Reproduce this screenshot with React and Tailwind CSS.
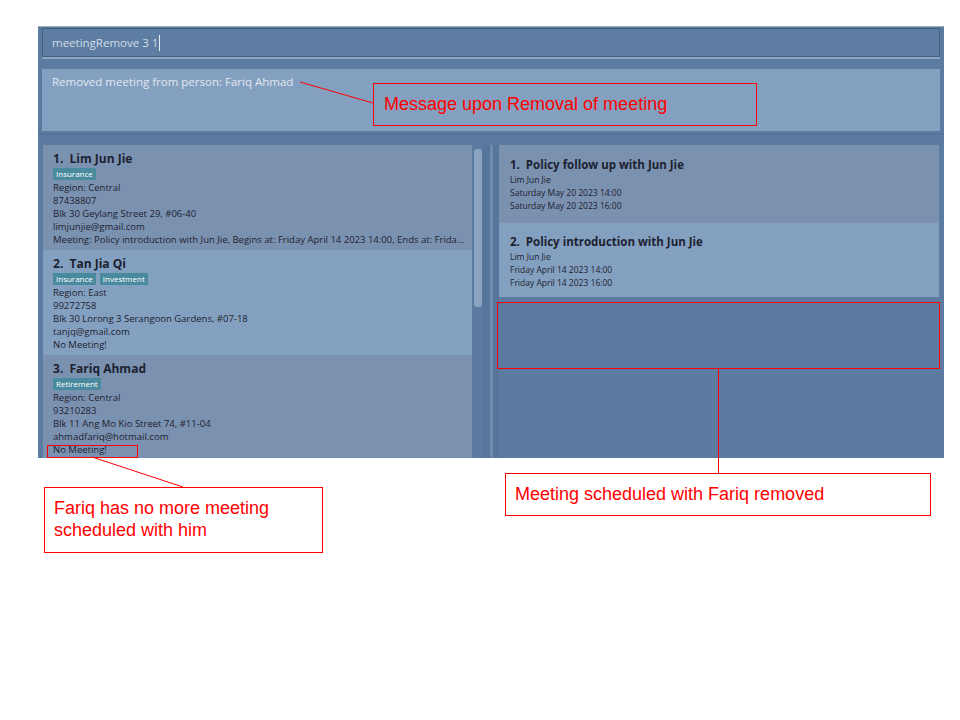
import React from 'react';

const persons = [
  {
    id: 1,
    name: 'Lim Jun Jie',
    tags: ['Insurance'],
    region: 'Central',
    phone: '87438807',
    address: 'Blk 30 Geylang Street 29, #06-40',
    email: 'limjunjie@gmail.com',
    meeting: 'Meeting: Policy introduction with Jun Jie, Begins at: Friday April 14 2023 14:00, Ends at: Friday April 14 2023 16:00',
    dark: true,
  },
  {
    id: 2,
    name: 'Tan Jia Qi',
    tags: ['Insurance', 'Investment'],
    region: 'East',
    phone: '99272758',
    address: 'Blk 30 Lorong 3 Serangoon Gardens, #07-18',
    email: 'tanjq@gmail.com',
    meeting: 'No Meeting!',
    dark: false,
  },
  {
    id: 3,
    name: 'Fariq Ahmad',
    tags: ['Retirement'],
    region: 'Central',
    phone: '93210283',
    address: 'Blk 11 Ang Mo Kio Street 74, #11-04',
    email: 'ahmadfariq@hotmail.com',
    meeting: 'No Meeting!',
    dark: true,
  },
];

const meetings = [
  { id: 1, title: 'Policy follow up with Jun Jie', person: 'Lim Jun Jie', start: 'Saturday May 20 2023 14:00', end: 'Saturday May 20 2023 16:00', dark: true },
  { id: 2, title: 'Policy introduction with Jun Jie', person: 'Lim Jun Jie', start: 'Friday April 14 2023 14:00', end: 'Friday April 14 2023 16:00', dark: false },
];

const font = { fontFamily: '"Open Sans", "Noto Sans", sans-serif' };
const arial = { fontFamily: '"Liberation Sans", Arial, sans-serif' };

const PersonCard = ({ p }) => (
  <div className={`${p.dark ? 'bg-[#7b91b0]' : 'bg-[#84a0c0]'} h-[105px] shrink-0 pl-[10px] pr-[6px] pt-[6px] text-[#1c2230]`}>
    <div className="text-[12px] font-bold leading-[16px]">{p.id}.&nbsp; {p.name}</div>
    <div className="flex gap-[4px] mt-[1px] mb-[1px]">
      {p.tags.map((t) => (
        <span key={t} className="bg-[#4a8a9e] text-white text-[8px] leading-[12px] px-[3px]">{t}</span>
      ))}
    </div>
    <div className="text-[9.5px] leading-[13px]">
      <div>Region: {p.region}</div>
      <div>{p.phone}</div>
      <div>{p.address}</div>
      <div>{p.email}</div>
      <div className="truncate">{p.meeting}</div>
    </div>
  </div>
);

const MeetingCard = ({ m }) => (
  <div className={`${m.dark ? 'bg-[#7b91b0] h-[78px] pt-[11px]' : 'bg-[#84a0c0] h-[74px] pt-[10px]'} pl-[11px] text-[#1c2230]`}>
    <div className="text-[11.5px] font-bold leading-[17px]">{m.id}.&nbsp; {m.title}</div>
    <div className="text-[8.5px] leading-[13px]">
      <div>{m.person}</div>
      <div>{m.start}</div>
      <div>{m.end}</div>
    </div>
  </div>
);

export default function App() {
  return (
    <div className="relative w-[960px] h-[720px] bg-white overflow-hidden" style={font}>
      <div className="pt-[26px] pl-[38px]">
        {/* app window */}
        <div className="w-[906px] h-[432px] bg-[#5b7ca0] border-t border-[#9aacc2] flex flex-col">
          {/* command box */}
          <div className="mx-[4px] mt-[1px] h-[29px] border border-[#44607f] bg-[#5d7ea2] flex items-center pl-[9px]">
            <span className="text-[11.5px] text-[#d3dce7]">meetingRemove 3 1</span>
            <span className="ml-[1px] w-[1px] h-[16px] bg-[#e6ecf3]"></span>
          </div>
          <div className="mx-[4px] h-[2px] bg-[#8aa3c0]"></div>
          {/* result display */}
          <div className="mx-[4px] mt-[10px] h-[62px] bg-[#84a0c0] pl-[10px] pt-[5px] text-[11.5px] leading-[16px] text-[#e1e8f0]">
            Removed meeting from person: Fariq Ahmad
          </div>
          <div className="mt-[2px] h-[2px] bg-[#54739a]"></div>
          {/* lists */}
          <div className="flex flex-1 mt-[10px] overflow-hidden">
            <div className="flex ml-[5px] w-[439px]">
              <div className="w-[429px] flex flex-col">
                {persons.map((p) => <PersonCard key={p.id} p={p} />)}
              </div>
              <div className="ml-[2px] mt-[4px] w-[8px] h-[158px] rounded-[3px] bg-[#8aa3c0]"></div>
            </div>
            <div className="w-[8px] bg-[#56769c]"></div>
            <div className="w-[3px] bg-[#6e8bad]"></div>
            <div className="w-[6px] bg-[#56769c]"></div>
            <div className="w-[440px] flex flex-col">
              {meetings.map((m) => <MeetingCard key={m.id} m={m} />)}
            </div>
          </div>
        </div>
      </div>

      {/* annotations */}
      <svg className="absolute left-0 top-0 pointer-events-none" width="960" height="720">
        <line x1="300" y1="82" x2="373" y2="103" stroke="#ff0000" strokeWidth="1" />
        <line x1="92" y1="457" x2="183" y2="487" stroke="#ff0000" strokeWidth="1" />
        <line x1="718.5" y1="368" x2="718.5" y2="473" stroke="#ff0000" strokeWidth="1" />
      </svg>
      <div className="absolute left-[373px] top-[83px] w-[384px] h-[43px] border border-[#ff0000] flex items-center pl-[10px] text-[#ff0000] text-[18px]" style={arial}>
        Message upon Removal of meeting
      </div>
      <div className="absolute left-[47px] top-[445px] w-[91px] h-[13px] border border-[#ff0000]"></div>
      <div className="absolute left-[44px] top-[487px] w-[279px] h-[66px] border border-[#ff0000] pl-[9px] pt-[9px] text-[#ff0000] text-[18px] leading-[22px]" style={arial}>
        <div>Fariq has no more meeting</div>
        <div>scheduled with him</div>
      </div>
      <div className="absolute left-[497px] top-[302px] w-[443px] h-[67px] border border-[#ff0000]"></div>
      <div className="absolute left-[505px] top-[473px] w-[426px] h-[43px] border border-[#ff0000] flex items-center pl-[9px] text-[#ff0000] text-[18px]" style={arial}>
        Meeting scheduled with Fariq removed
      </div>
    </div>
  );
}
